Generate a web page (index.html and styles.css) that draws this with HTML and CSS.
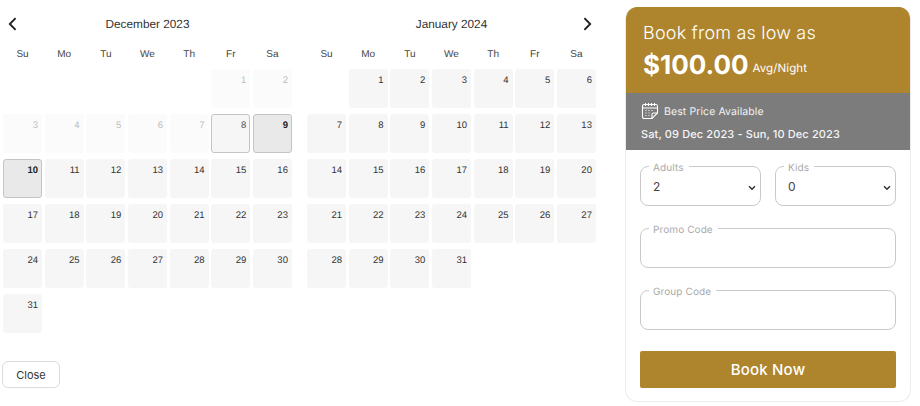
FILE: index.html
```html
<!DOCTYPE html>
<html lang="en">
<head>
<meta charset="utf-8">
<title>Book</title>
<link rel="stylesheet" href="styles.css">
</head>
<body>
<main class="page">
  <section class="picker">
    <div class="months">
      <div class="month">
        <header class="month-head">
          <button class="nav nav-prev" aria-label="Previous"><svg width="9" height="14" viewBox="0 0 9 14"><path d="M7.6 1.2 1.8 7l5.8 5.8" fill="none" stroke="#1c1c1c" stroke-width="1.8"/></svg></button>
          <h2 class="month-title">December 2023</h2>
        </header>
        <div class="grid weekdays"><span>Su</span><span>Mo</span><span>Tu</span><span>We</span><span>Th</span><span>Fr</span><span>Sa</span></div>
        <div class="grid days">
          <i></i><i></i><i></i><i></i><i></i>
          <div class="day off">1</div><div class="day off">2</div>
          <div class="day off">3</div><div class="day off">4</div><div class="day off">5</div><div class="day off">6</div><div class="day off">7</div><div class="day hover">8</div><div class="day sel">9</div>
          <div class="day sel">10</div><div class="day">11</div><div class="day">12</div><div class="day">13</div><div class="day">14</div><div class="day">15</div><div class="day">16</div>
          <div class="day">17</div><div class="day">18</div><div class="day">19</div><div class="day">20</div><div class="day">21</div><div class="day">22</div><div class="day">23</div>
          <div class="day">24</div><div class="day">25</div><div class="day">26</div><div class="day">27</div><div class="day">28</div><div class="day">29</div><div class="day">30</div>
          <div class="day">31</div>
        </div>
      </div>
      <div class="month">
        <header class="month-head">
          <h2 class="month-title">January 2024</h2>
          <button class="nav nav-next" aria-label="Next"><svg width="9" height="14" viewBox="0 0 9 14"><path d="M1.4 1.2 7.2 7l-5.8 5.8" fill="none" stroke="#1c1c1c" stroke-width="1.8"/></svg></button>
        </header>
        <div class="grid weekdays"><span>Su</span><span>Mo</span><span>Tu</span><span>We</span><span>Th</span><span>Fr</span><span>Sa</span></div>
        <div class="grid days">
          <i></i>
          <div class="day">1</div><div class="day">2</div><div class="day">3</div><div class="day">4</div><div class="day">5</div><div class="day">6</div>
          <div class="day">7</div><div class="day">8</div><div class="day">9</div><div class="day">10</div><div class="day">11</div><div class="day">12</div><div class="day">13</div>
          <div class="day">14</div><div class="day">15</div><div class="day">16</div><div class="day">17</div><div class="day">18</div><div class="day">19</div><div class="day">20</div>
          <div class="day">21</div><div class="day">22</div><div class="day">23</div><div class="day">24</div><div class="day">25</div><div class="day">26</div><div class="day">27</div>
          <div class="day">28</div><div class="day">29</div><div class="day">30</div><div class="day">31</div>
        </div>
      </div>
    </div>
    <button class="close">Close</button>
  </section>

  <aside class="card">
    <div class="price">
      <p class="price-lead">Book from as low as</p>
      <p class="price-line"><strong class="price-value">$100.00</strong><span class="price-unit">Avg/Night</span></p>
    </div>
    <div class="stay">
      <p class="stay-note">
        <svg class="stay-icon" width="18" height="18" viewBox="0 0 18 18" fill="none" stroke="#fff" stroke-width="1.1"><path d="M11 16.5H3.2A1.7 1.7 0 0 1 1.5 14.8V4.2A1.7 1.7 0 0 1 3.2 2.5h11.6a1.7 1.7 0 0 1 1.7 1.7V11z"/><path d="M11 16.5V12.6c0-.9.7-1.6 1.6-1.6h3.9"/><path d="M4.5 1v3M7.5 1v3M10.5 1v3M13.5 1v3M1.5 6h15"/><path d="M4.5 8.5h1M7.5 8.5h1M10.5 8.5h1M4.5 11h1M7.5 11h1M4.5 13.5h1M7.5 13.5h1" stroke-width="1"/></svg>
        <span>Best Price Available</span>
      </p>
      <p class="stay-dates">Sat, 09 Dec 2023 - Sun, 10 Dec 2023</p>
    </div>
    <form class="form">
      <div class="pair">
        <fieldset class="field"><legend>Adults</legend><select class="control"><option>2</option></select><svg class="caret" width="8" height="6" viewBox="0 0 8 6"><path d="M1 1.2 4 4.2l3-3" fill="none" stroke="#333" stroke-width="1.5"/></svg></fieldset>
        <fieldset class="field"><legend>Kids</legend><select class="control"><option>0</option></select><svg class="caret" width="8" height="6" viewBox="0 0 8 6"><path d="M1 1.2 4 4.2l3-3" fill="none" stroke="#333" stroke-width="1.5"/></svg></fieldset>
      </div>
      <fieldset class="field"><legend>Promo Code</legend><input class="control" type="text"></fieldset>
      <fieldset class="field"><legend>Group Code</legend><input class="control" type="text"></fieldset>
      <button class="book" type="button">Book Now</button>
    </form>
  </aside>
</main>
</body>
</html>
```
FILE: styles.css
```css
* { box-sizing: border-box; }
html, body { margin: 0; background: #fff; }
body { width: 920px; height: 406px; overflow: hidden; font-family: "Liberation Sans", Arial, sans-serif; color: #333; text-rendering: geometricPrecision; }
p, h2 { margin: 0; }
button { font: inherit; cursor: pointer; }

.page { display: flex; height: 406px; padding: 7px 9px 4px 2px; }

.picker { width: 623px; flex: none; display: flex; flex-direction: column; }
.months { display: flex; gap: 15px; padding-left: 1px; }
.month { width: 289px; flex: none; }
.month-head { position: relative; height: 34px; display: flex; align-items: center; justify-content: center; padding-top: 1px; }
.month-title { font-size: 11.8px; font-weight: 400; color: #333; line-height: 33px; }
.nav { position: absolute; top: 10px; width: 14px; height: 14px; padding: 0; border: 0; background: none; display: flex; align-items: center; justify-content: center; }
.nav-prev { left: 2px; }
.nav-next { right: 2px; }

.grid { display: grid; grid-template-columns: repeat(7, 39px); justify-content: space-between; }
.weekdays { height: 28px; align-items: center; padding-bottom: 2px; font-size: 10px; color: #444; text-align: center; }
.days { grid-auto-rows: 39px; row-gap: 6px; }
.day { border-radius: 3px; background: #f6f6f6; padding: 6px 4px 0 0; text-align: right; font-size: 9.5px; line-height: 11px; color: #333; }
.day.off { background: #fbfbfb; color: #bbb; }
.day.hover { background: #f6f6f6; border: 1.2px solid #c4c4c4; padding: 5px 3px 0 0; color: #555; }
.day.sel { background: #e9e9e9; border: 1.2px solid #c4c4c4; padding: 5px 3px 0 0; color: #222; font-weight: 700; }

.close { margin-top: auto; margin-bottom: 14px; width: 58px; height: 27px; padding: 0; border: 1.3px solid #dcdcdc; border-radius: 6px; background: #fff; font-family: "Inter", sans-serif; font-size: 11px; color: #333; }

.card { width: 286px; height: 395px; flex: none; border: 1px solid #ececec; border-top: 0; border-radius: 12px; overflow: hidden; font-family: "Inter", "Open Sans", sans-serif; background: #fff; }
.price { height: 86px; background: #ae852d; color: #fff; padding: 15px 17px 0; }
.price-lead { font-size: 18px; font-weight: 300; line-height: 24px; letter-spacing: .2px; }
.price-line { line-height: 38px; margin-top: 1px; }
.price-value { font-size: 26px; font-weight: 700; }
.price-unit { margin-left: 4px; font-size: 11.5px; letter-spacing: .1px; vertical-align: 2px; }

.stay { height: 57px; background: #7c7c7c; color: #fff; padding: 9px 15px 0; }
.stay-note { display: flex; align-items: center; gap: 5px; height: 18px; font-size: 10.5px; color: #f2f2f2; letter-spacing: .1px; }
.stay-icon { flex: none; }
.stay-dates { margin-top: 6px; font-size: 11px; line-height: 16px; font-weight: 500; color: #f6f6f6; letter-spacing: .12px; }

.form { display: flex; flex-direction: column; gap: 16px; padding: 10px 14px 0; }
.pair { display: flex; justify-content: space-between; }
.pair .field { width: 121px; }
.field { position: relative; margin: 0; padding: 0 12px; height: 46px; min-width: 0; border: 1.3px solid #c9c9c9; border-radius: 8px; }
.field legend { position: relative; top: 2px; margin-left: -4px; padding: 0 5px 0 4px; font-size: 10px; line-height: 12px; color: #aaa; letter-spacing: .1px; }
.control { display: block; width: 100%; height: 26px; margin-top: 1px; padding: 0; border: 0; outline: 0; background: transparent; font-family: inherit; font-size: 12px; color: #444; appearance: none; }
.caret { position: absolute; right: 4px; bottom: 14px; pointer-events: none; }
.book { margin-top: 5px; height: 37px; border: 0; border-radius: 2px; background: #ae852d; color: #fff; font-size: 15px; font-weight: 500; letter-spacing: .2px; }
```
